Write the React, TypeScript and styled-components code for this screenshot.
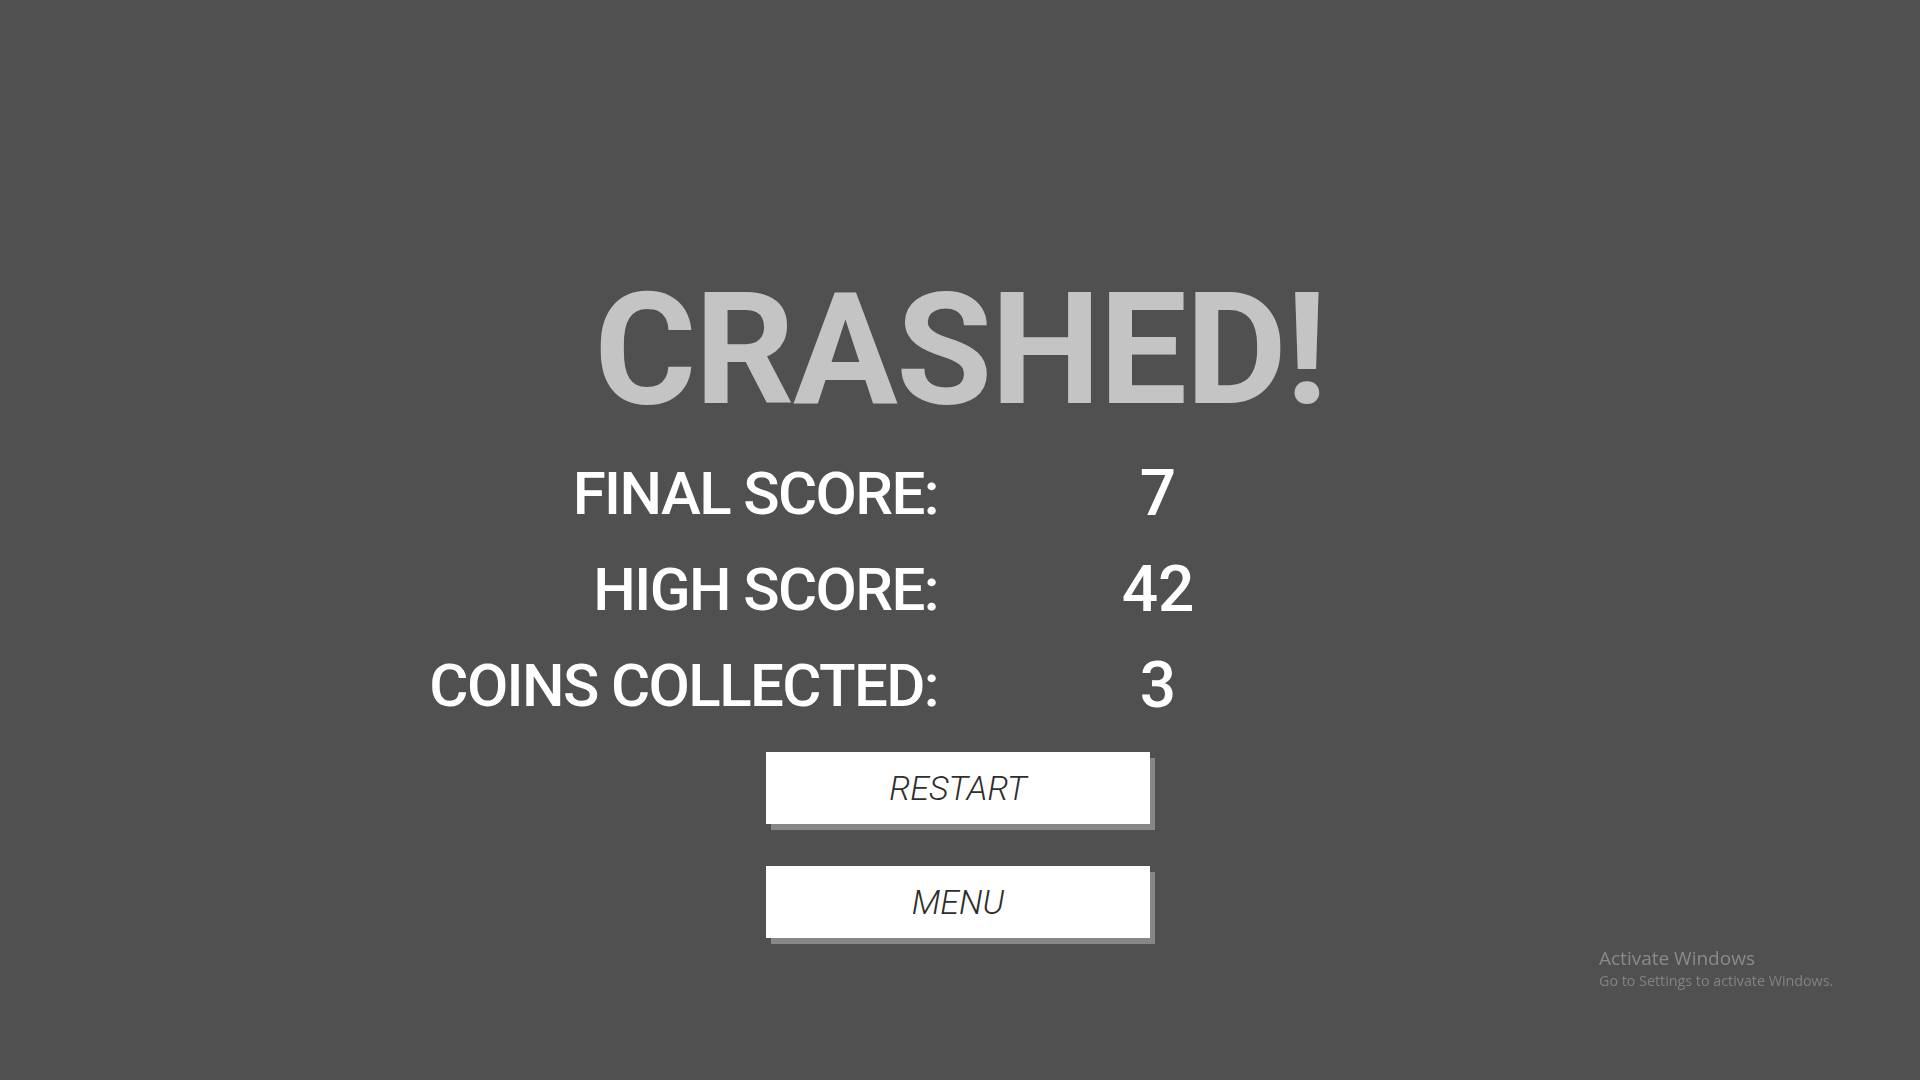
import React from 'react';
import styled, { createGlobalStyle } from 'styled-components';

interface StatLine {
  label: string;
  value: number;
}

const stats: StatLine[] = [
  { label: 'FINAL SCORE:', value: 7 },
  { label: 'HIGH SCORE:', value: 42 },
  { label: 'COINS COLLECTED:', value: 3 },
];

const GlobalStyle = createGlobalStyle`
  html, body {
    margin: 0;
    padding: 0;
    background: #505050;
  }
  body {
    font-family: Roboto, "Liberation Sans", sans-serif;
  }
`;

const Screen = styled.div`
  width: 100vw;
  height: 100vh;
  overflow: hidden;
  background: #505050;
  display: flex;
  flex-direction: column;
  align-items: center;
  padding-top: 272px;
  box-sizing: border-box;
`;

const Title = styled.h1`
  margin: 0;
  font-family: Roboto, sans-serif;
  font-weight: 700;
  font-size: 156px;
  line-height: 1;
  color: #c4c4c4;
  letter-spacing: -1.6px;
`;

const StatsGrid = styled.div`
  margin-top: 18px;
  width: 100%;
  box-sizing: border-box;
  padding-right: 546px;
  display: grid;
  grid-template-columns: 1fr 434px;
  grid-auto-rows: 96px;
  align-items: center;
`;

const Label = styled.div`
  text-align: right;
  padding-right: 2px;
  font-size: 60px;
  font-weight: 500;
  letter-spacing: -1.6px;
  color: #ffffff;
  white-space: nowrap;
  line-height: 96px;
`;

const Value = styled.div`
  text-align: center;
  padding-left: 2px;
  font-size: 64px;
  font-weight: 500;
  color: #ffffff;
  line-height: 96px;
`;

const Buttons = styled.div`
  margin-top: 18px;
  margin-right: 4px;
  display: flex;
  flex-direction: column;
  gap: 42px;
`;

const MenuButton = styled.button`
  width: 384px;
  height: 72px;
  border: none;
  border-radius: 0;
  background: #ffffff;
  box-shadow: 5px 6px 0 #878787;
  display: flex;
  align-items: center;
  justify-content: center;
  font-family: Roboto, sans-serif;
  font-style: italic;
  font-weight: 300;
  font-size: 34px;
  line-height: 1;
  color: #2e2e2e;
  padding: 0;
  cursor: pointer;
`;

const Watermark = styled.div`
  position: fixed;
  left: 1599px;
  top: 945px;
  font-family: "Open Sans", "Noto Sans", sans-serif;
  color: #8a8a8a;
  pointer-events: none;
`;

const WatermarkTitle = styled.div`
  font-size: 19px;
  line-height: 26px;
`;

const WatermarkHint = styled.div`
  font-size: 14.3px;
  line-height: 20px;
  color: #828282;
`;

export default function App() {
  return (
    <Screen>
      <GlobalStyle />
      <Title>CRASHED!</Title>
      <StatsGrid>
        {stats.map(s => (
          <React.Fragment key={s.label}>
            <Label>{s.label}</Label>
            <Value>{s.value}</Value>
          </React.Fragment>
        ))}
      </StatsGrid>
      <Buttons>
        <MenuButton>RESTART</MenuButton>
        <MenuButton>MENU</MenuButton>
      </Buttons>
      <Watermark>
        <WatermarkTitle>Activate Windows</WatermarkTitle>
        <WatermarkHint>Go to Settings to activate Windows.</WatermarkHint>
      </Watermark>
    </Screen>
  );
}
